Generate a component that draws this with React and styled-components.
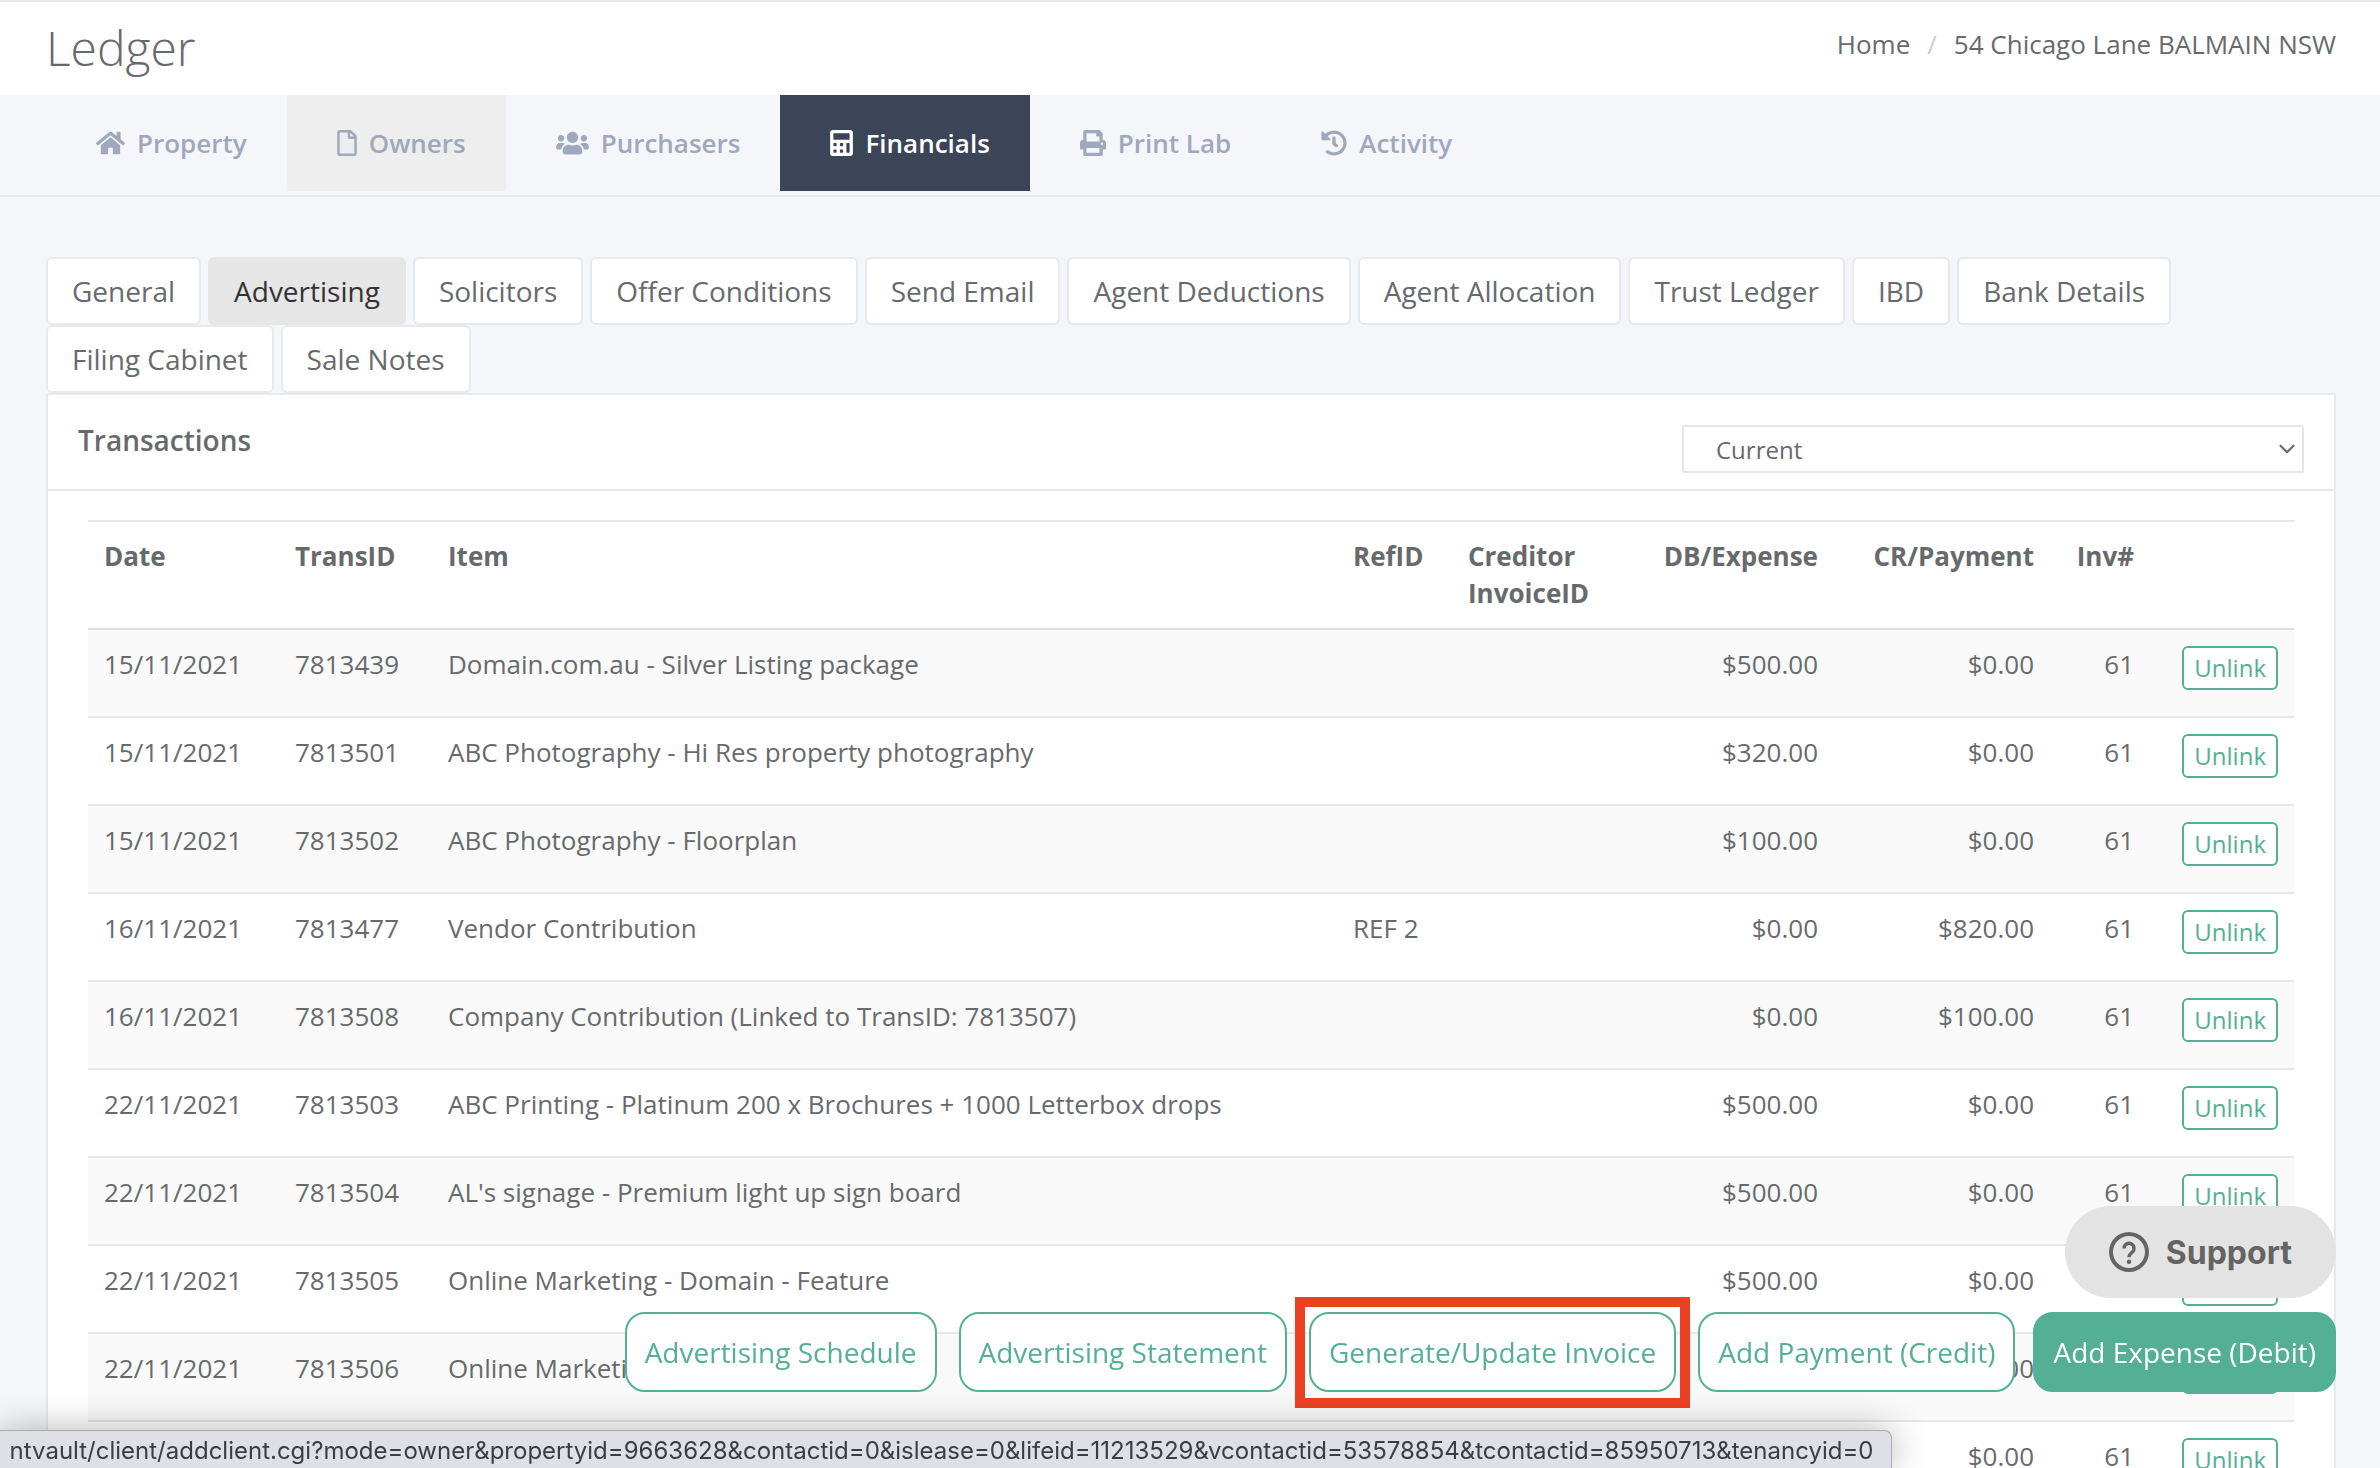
import React from 'react'
import styled, {createGlobalStyle} from 'styled-components'
import {FaCalculator, FaHistory, FaHome, FaPrint, FaRegFile, FaUsers} from 'react-icons/fa'
import {FiChevronDown} from 'react-icons/fi'

const GlobalStyle = createGlobalStyle`
  * {
    box-sizing: border-box;
  }
  body {
    margin: 0;
    color: #676a6c;
    background-color: #f4f6fa;
    font-family: "Open Sans", sans-serif;
    font-size: 26px;
    line-height: 37px;
  }
  a {
    color: inherit;
    text-decoration: none;
  }
  button, select {
    font-family: inherit;
  }
`;
const Page = styled.div`
  height: 100vh;
  overflow: hidden;
`;
const Header = styled.header`
  display: flex;
  justify-content: space-between;
  align-items: flex-start;
  height: 95px;
  padding: 18px 44px 0 46px;
  border-top: 2px solid #e7eaec;
  background-color: #fff;
`;
const Title = styled.h1`
  margin: 0;
  font-size: 48px;
  font-weight: 300;
  line-height: 56px;
`;
const Breadcrumb = styled.nav`
  display: flex;
  gap: 17px;
  padding-top: 6px;
`;
const Slash = styled.span`
  color: #ccc;
`;
const MainNav = styled.nav`
  display: flex;
  height: 102px;
  padding: 0 46px 4px;
  border-bottom: 2px solid #e7eaec;
`;
const NavLink = styled.a`
  display: flex;
  align-items: center;
  gap: 12px;
  padding: 0 40px 0 50px;
  font-weight: 600;
  color: ${({$active}) => ($active ? '#fff' : '#a0a8bb')};
  background-color: ${({$active, $hover}) => ($active ? '#3c4457' : $hover ? '#eee' : 'transparent')};
  svg {
    flex: none;
    width: ${({$iconWidth}) => $iconWidth}px;
    height: 26px;
  }
`;
const Content = styled.main`
  padding: 60px 44px 0 46px;
`;
const Tabs = styled.div`
  display: flex;
  flex-wrap: wrap;
  column-gap: 7px;
  padding-right: 100px;
`;
const Tab = styled.button`
  height: 68px;
  padding: 0 24px;
  border: 2px solid ${({$active}) => ($active ? '#e6e6e6' : '#e7eaec')};
  border-radius: 6px;
  font-size: 28px;
  color: ${({$active}) => ($active ? '#333' : '#676a6c')};
  background-color: ${({$active}) => ($active ? '#e6e6e6' : '#fff')};
`;
const Panel = styled.section`
  border: 2px solid #e7eaec;
  background-color: #fff;
`;
const PanelHeader = styled.div`
  display: flex;
  justify-content: space-between;
  align-items: flex-start;
  height: 96px;
  padding: 26px 30px 0;
  border-bottom: 2px solid #e7eaec;
`;
const PanelTitle = styled.h2`
  margin: 0;
  font-size: 28px;
  font-weight: 600;
  line-height: 38px;
`;
const SelectBox = styled.div`
  display: grid;
  align-items: center;
  width: 622px;
  margin-top: 4px;
  svg {
    grid-area: 1 / 1;
    justify-self: end;
    margin-right: 4px;
    pointer-events: none;
  }
`;
const Select = styled.select`
  grid-area: 1 / 1;
  appearance: none;
  height: 48px;
  padding: 0 32px;
  border: 2px solid #e5e6e7;
  border-radius: 2px;
  font-size: 24px;
  color: #676a6c;
  background-color: #fff;
`;
const TableWrapper = styled.div`
  padding: 29px 40px 0;
`;
const Table = styled.table`
  width: 100%;
  table-layout: fixed;
  border-collapse: separate;
  border-spacing: 0;
`;
const Th = styled.th`
  width: ${({$width}) => $width || 'auto'};
  height: 110px;
  padding: 16px;
  border-top: 2px solid #e7e7e7;
  border-bottom: 2px solid #ddd;
  font-weight: 700;
  text-align: ${({$right}) => ($right ? 'right' : 'left')};
  vertical-align: top;
`;
const Tr = styled.tr`
  &:nth-child(odd) {
    background-color: #f9f9f9;
  }
`;
const Td = styled.td`
  height: 88px;
  padding: 16px 16px 0;
  border-bottom: 2px solid #e7e7e7;
  text-align: ${({$right}) => ($right ? 'right' : 'left')};
  vertical-align: top;
`;
const UnlinkButton = styled.button`
  display: block;
  height: 44px;
  margin-left: auto;
  padding: 0 10px;
  border: 2px solid #54b095;
  border-radius: 6px;
  font-size: 24px;
  line-height: 36px;
  color: #54b095;
  background-color: #fff;
`;
const Actions = styled.div`
  position: fixed;
  right: 44px;
  bottom: 76px;
  display: flex;
  align-items: center;
  gap: 18px;
`;
const ActionGroup = styled.div`
  display: flex;
  align-items: center;
  gap: 22px;
`;
const ActionButton = styled.button`
  height: 80px;
  padding: 0 18px;
  border: 2px solid #54b095;
  border-radius: 20px;
  font-size: 28px;
  color: ${({$primary}) => ($primary ? '#fff' : '#54b095')};
  background-color: ${({$primary}) => ($primary ? '#54b095' : '#fff')};
`;
const Highlight = styled.div`
  margin: -16px -14px;
  padding: 5px 4px 6px;
  border: 10px solid #ec4023;
`;
const SupportButton = styled.button`
  position: fixed;
  right: 44px;
  bottom: 170px;
  display: flex;
  align-items: center;
  gap: 17px;
  height: 92px;
  padding: 0 44px;
  border: none;
  border-radius: 46px;
  font-family: Inter, sans-serif;
  font-size: 32px;
  font-weight: 700;
  color: #646464;
  background-color: #e3e3e3;
`;
const StatusBar = styled.div`
  position: fixed;
  left: 0;
  bottom: 0;
  display: flex;
  justify-content: center;
  width: 1892px;
  height: 38px;
  padding-right: 8px;
  border: 1px solid #a9aaad;
  border-width: 1px 1px 0 0;
  border-radius: 0 8px 0 0;
  font-family: Inter, sans-serif;
  font-size: 24px;
  line-height: 40px;
  white-space: nowrap;
  color: #3c3d40;
  background-color: #dfe0e5;
  box-shadow: 0 0 36px rgba(0, 0, 0, 0.3);
`;

const navItems = [
  {label: 'Property', icon: <FaHome />, iconWidth: 29, href: '#property'},
  {label: 'Owners', icon: <FaRegFile />, iconWidth: 20, href: '#owners', hover: true},
  {label: 'Purchasers', icon: <FaUsers />, iconWidth: 33, href: '#purchasers'},
  {label: 'Financials', icon: <FaCalculator />, iconWidth: 23, href: '#financials', active: true},
  {label: 'Print Lab', icon: <FaPrint />, iconWidth: 26, href: '#print-lab'},
  {label: 'Activity', icon: <FaHistory />, iconWidth: 26, href: '#activity'},
]

const tabs = [
  'General', 'Advertising', 'Solicitors', 'Offer Conditions', 'Send Email', 'Agent Deductions',
  'Agent Allocation', 'Trust Ledger', 'IBD', 'Bank Details', 'Filing Cabinet', 'Sale Notes',
]

const transactions = [
  {date: '15/11/2021', id: '7813439', item: 'Domain.com.au - Silver Listing package', db: '$500.00', cr: '$0.00'},
  {date: '15/11/2021', id: '7813501', item: 'ABC Photography - Hi Res property photography', db: '$320.00', cr: '$0.00'},
  {date: '15/11/2021', id: '7813502', item: 'ABC Photography - Floorplan', db: '$100.00', cr: '$0.00'},
  {date: '16/11/2021', id: '7813477', item: 'Vendor Contribution', ref: 'REF 2', db: '$0.00', cr: '$820.00'},
  {date: '16/11/2021', id: '7813508', item: 'Company Contribution (Linked to TransID: 7813507)', db: '$0.00', cr: '$100.00'},
  {date: '22/11/2021', id: '7813503', item: 'ABC Printing - Platinum 200 x Brochures + 1000 Letterbox drops', db: '$500.00', cr: '$0.00'},
  {date: '22/11/2021', id: '7813504', item: "AL's signage - Premium light up sign board", db: '$500.00', cr: '$0.00'},
  {date: '22/11/2021', id: '7813505', item: 'Online Marketing - Domain - Feature', db: '$500.00', cr: '$0.00'},
  {date: '22/11/2021', id: '7813506', item: 'Online Marketing', db: '$500.00', cr: '$0.00'},
  {cr: '$0.00'},
]

const HelpIcon = () => (
  <svg width="40" height="40" viewBox="0 0 20 20" fill="#646464" aria-hidden="true">
    <path fillRule="evenodd" d="M10 0a10 10 0 1 0 0 20 10 10 0 0 0 0-20zm0 2a8 8 0 1 1 0 16 8 8 0 0 1 0-16z" />
    <path d="M7.5 8.2a2.5 2.5 0 1 1 4.1 1.9c-1 .8-1.6 1.2-1.6 2.5" fill="none" stroke="#646464" strokeWidth="1.7" />
    <circle cx="10" cy="14.9" r="1.1" />
  </svg>
)

const App = () => {
  return (
    <Page>
      <GlobalStyle />
      <Header>
        <Title>Ledger</Title>
        <Breadcrumb>
          <a href="#home">Home</a>
          <Slash>/</Slash>
          <a href="#property">54 Chicago Lane BALMAIN NSW</a>
        </Breadcrumb>
      </Header>
      <MainNav>
        {navItems.map(({label, icon, iconWidth, href, active, hover}) => (
          <NavLink key={label} href={href} $iconWidth={iconWidth} $active={active} $hover={hover}>
            {icon}
            {label}
          </NavLink>
        ))}
      </MainNav>
      <Content>
        <Tabs>
          {tabs.map((tab) => (
            <Tab key={tab} $active={tab === 'Advertising'}>{tab}</Tab>
          ))}
        </Tabs>
        <Panel>
          <PanelHeader>
            <PanelTitle>Transactions</PanelTitle>
            <SelectBox>
              <Select aria-label="Transactions period">
                <option>Current</option>
              </Select>
              <FiChevronDown size={26} />
            </SelectBox>
          </PanelHeader>
          <TableWrapper>
            <Table>
              <thead>
                <tr>
                  <Th $width="191px">Date</Th>
                  <Th $width="153px">TransID</Th>
                  <Th>Item</Th>
                  <Th $width="115px">RefID</Th>
                  <Th $width="181px">Creditor InvoiceID</Th>
                  <Th $width="201px" $right>DB/Expense</Th>
                  <Th $width="216px" $right>CR/Payment</Th>
                  <Th $width="100px" $right>Inv#</Th>
                  <Th $width="144px" aria-label="Actions" />
                </tr>
              </thead>
              <tbody>
                {transactions.map((row, i) => (
                  <Tr key={i}>
                    <Td>{row.date}</Td>
                    <Td>{row.id}</Td>
                    <Td>{row.item}</Td>
                    <Td>{row.ref}</Td>
                    <Td />
                    <Td $right>{row.db}</Td>
                    <Td $right>{row.cr}</Td>
                    <Td $right>61</Td>
                    <Td>
                      <UnlinkButton>Unlink</UnlinkButton>
                    </Td>
                  </Tr>
                ))}
              </tbody>
            </Table>
          </TableWrapper>
        </Panel>
      </Content>
      <Actions>
        <ActionGroup>
          <ActionButton>Advertising Schedule</ActionButton>
          <ActionButton>Advertising Statement</ActionButton>
          <Highlight>
            <ActionButton>Generate/Update Invoice</ActionButton>
          </Highlight>
          <ActionButton>Add Payment (Credit)</ActionButton>
        </ActionGroup>
        <ActionButton $primary>Add Expense (Debit)</ActionButton>
      </Actions>
      <SupportButton>
        <HelpIcon />
        Support
      </SupportButton>
      <StatusBar>
        ntvault/client/addclient.cgi?mode=owner&amp;propertyid=9663628&amp;contactid=0&amp;islease=0&amp;lifeid=11213529&amp;vcontactid=53578854&amp;tcontactid=85950713&amp;tenancyid=0
      </StatusBar>
    </Page>
  )
}

export default App
